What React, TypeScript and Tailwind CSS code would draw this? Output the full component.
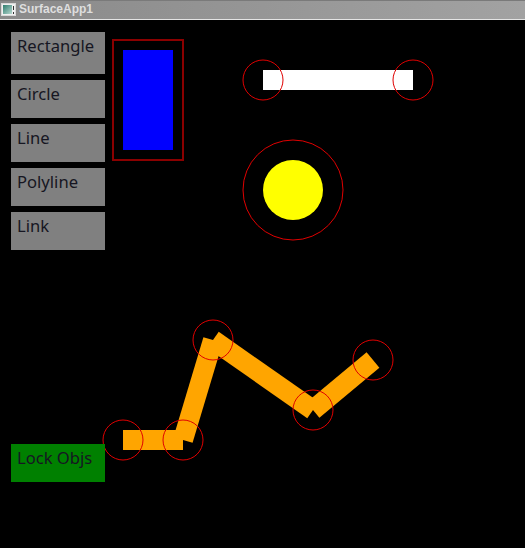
import React from "react";

const btn =
  "h-[38px] w-[94px] bg-[#808080] text-[#161622] text-[16.6px] leading-[22px] pl-[6px] pt-[3px]";

export default function App() {
  return (
    <div className="w-[525px] h-[548px] bg-black flex flex-col overflow-hidden" style={{ fontFamily: '"Noto Sans", "Open Sans", sans-serif' }}>
      <div className="h-[20px] flex items-start bg-[linear-gradient(to_right,#8a8a8a,#a2a2a2)] border-b border-[#e4e4e4] border-t border-t-[#7a7a7a]">
        <svg width="16" height="14" viewBox="0 0 16 14" className="ml-[1px] mt-[2px]">
          <defs>
            <linearGradient id="ig" x1="0" x2="1" y1="0" y2="1">
              <stop offset="0" stopColor="#2e7d6e" />
              <stop offset="1" stopColor="#b8d8d0" />
            </linearGradient>
          </defs>
          <rect x="0.5" y="0.5" width="14" height="12" fill="#f0f0f0" stroke="#d8d8d8" />
          <rect x="2" y="2" width="9" height="9" fill="url(#ig)" />
          <rect x="12" y="3" width="1" height="4" fill="#333" />
          <rect x="12" y="9" width="1" height="2" fill="#333" />
        </svg>
        <span className="ml-[2px] text-[12px] leading-[16px] font-bold text-[#dedede]" style={{ fontFamily: '"Liberation Sans", Arial, sans-serif' }}>
          SurfaceApp1
        </span>
      </div>
      <div className="relative flex-1">
        <svg className="absolute left-0 top-0" width="525" height="528" viewBox="0 20 525 528">
          <rect x="113" y="40" width="70" height="120" fill="none" stroke="#8b0000" strokeWidth="2" />
          <rect x="123" y="50" width="50" height="100" fill="#0000ff" />
          <rect x="263" y="70" width="150" height="20" fill="#ffffff" />
          <circle cx="263" cy="80" r="20" fill="none" stroke="#e00000" strokeWidth="1" />
          <circle cx="413" cy="80" r="20" fill="none" stroke="#e00000" strokeWidth="1" />
          <circle cx="293" cy="190" r="30" fill="#ffff00" />
          <circle cx="293" cy="190" r="50" fill="none" stroke="#e00000" strokeWidth="1" />
          <g stroke="#ffa500" strokeWidth="20" strokeLinecap="butt" fill="none">
            <line x1="123" y1="440" x2="183" y2="440" />
            <line x1="183" y1="440" x2="213" y2="340" />
            <line x1="213" y1="340" x2="313" y2="410" />
            <line x1="313" y1="410" x2="373" y2="360" />
          </g>
          <g fill="none" stroke="#e00000" strokeWidth="1">
            <circle cx="123" cy="440" r="20" />
            <circle cx="183" cy="440" r="20" />
            <circle cx="213" cy="340" r="20" />
            <circle cx="313" cy="410" r="20" />
            <circle cx="373" cy="360" r="20" />
          </g>
        </svg>
        <div className="relative flex flex-col gap-[6px] pl-[11px] pt-[12px] w-fit">
          <div className={btn.replace("h-[38px]", "h-[42px]")}>Rectangle</div>
          <div className={btn}>Circle</div>
          <div className={btn}>Line</div>
          <div className={btn}>Polyline</div>
          <div className={btn}>Link</div>
          <div className="mt-[188px] h-[38px] w-[94px] bg-[#008000] text-[#161622] text-[16.6px] leading-[22px] pl-[6px] pt-[3px]">Lock Objs</div>
        </div>
      </div>
    </div>
  );
}
